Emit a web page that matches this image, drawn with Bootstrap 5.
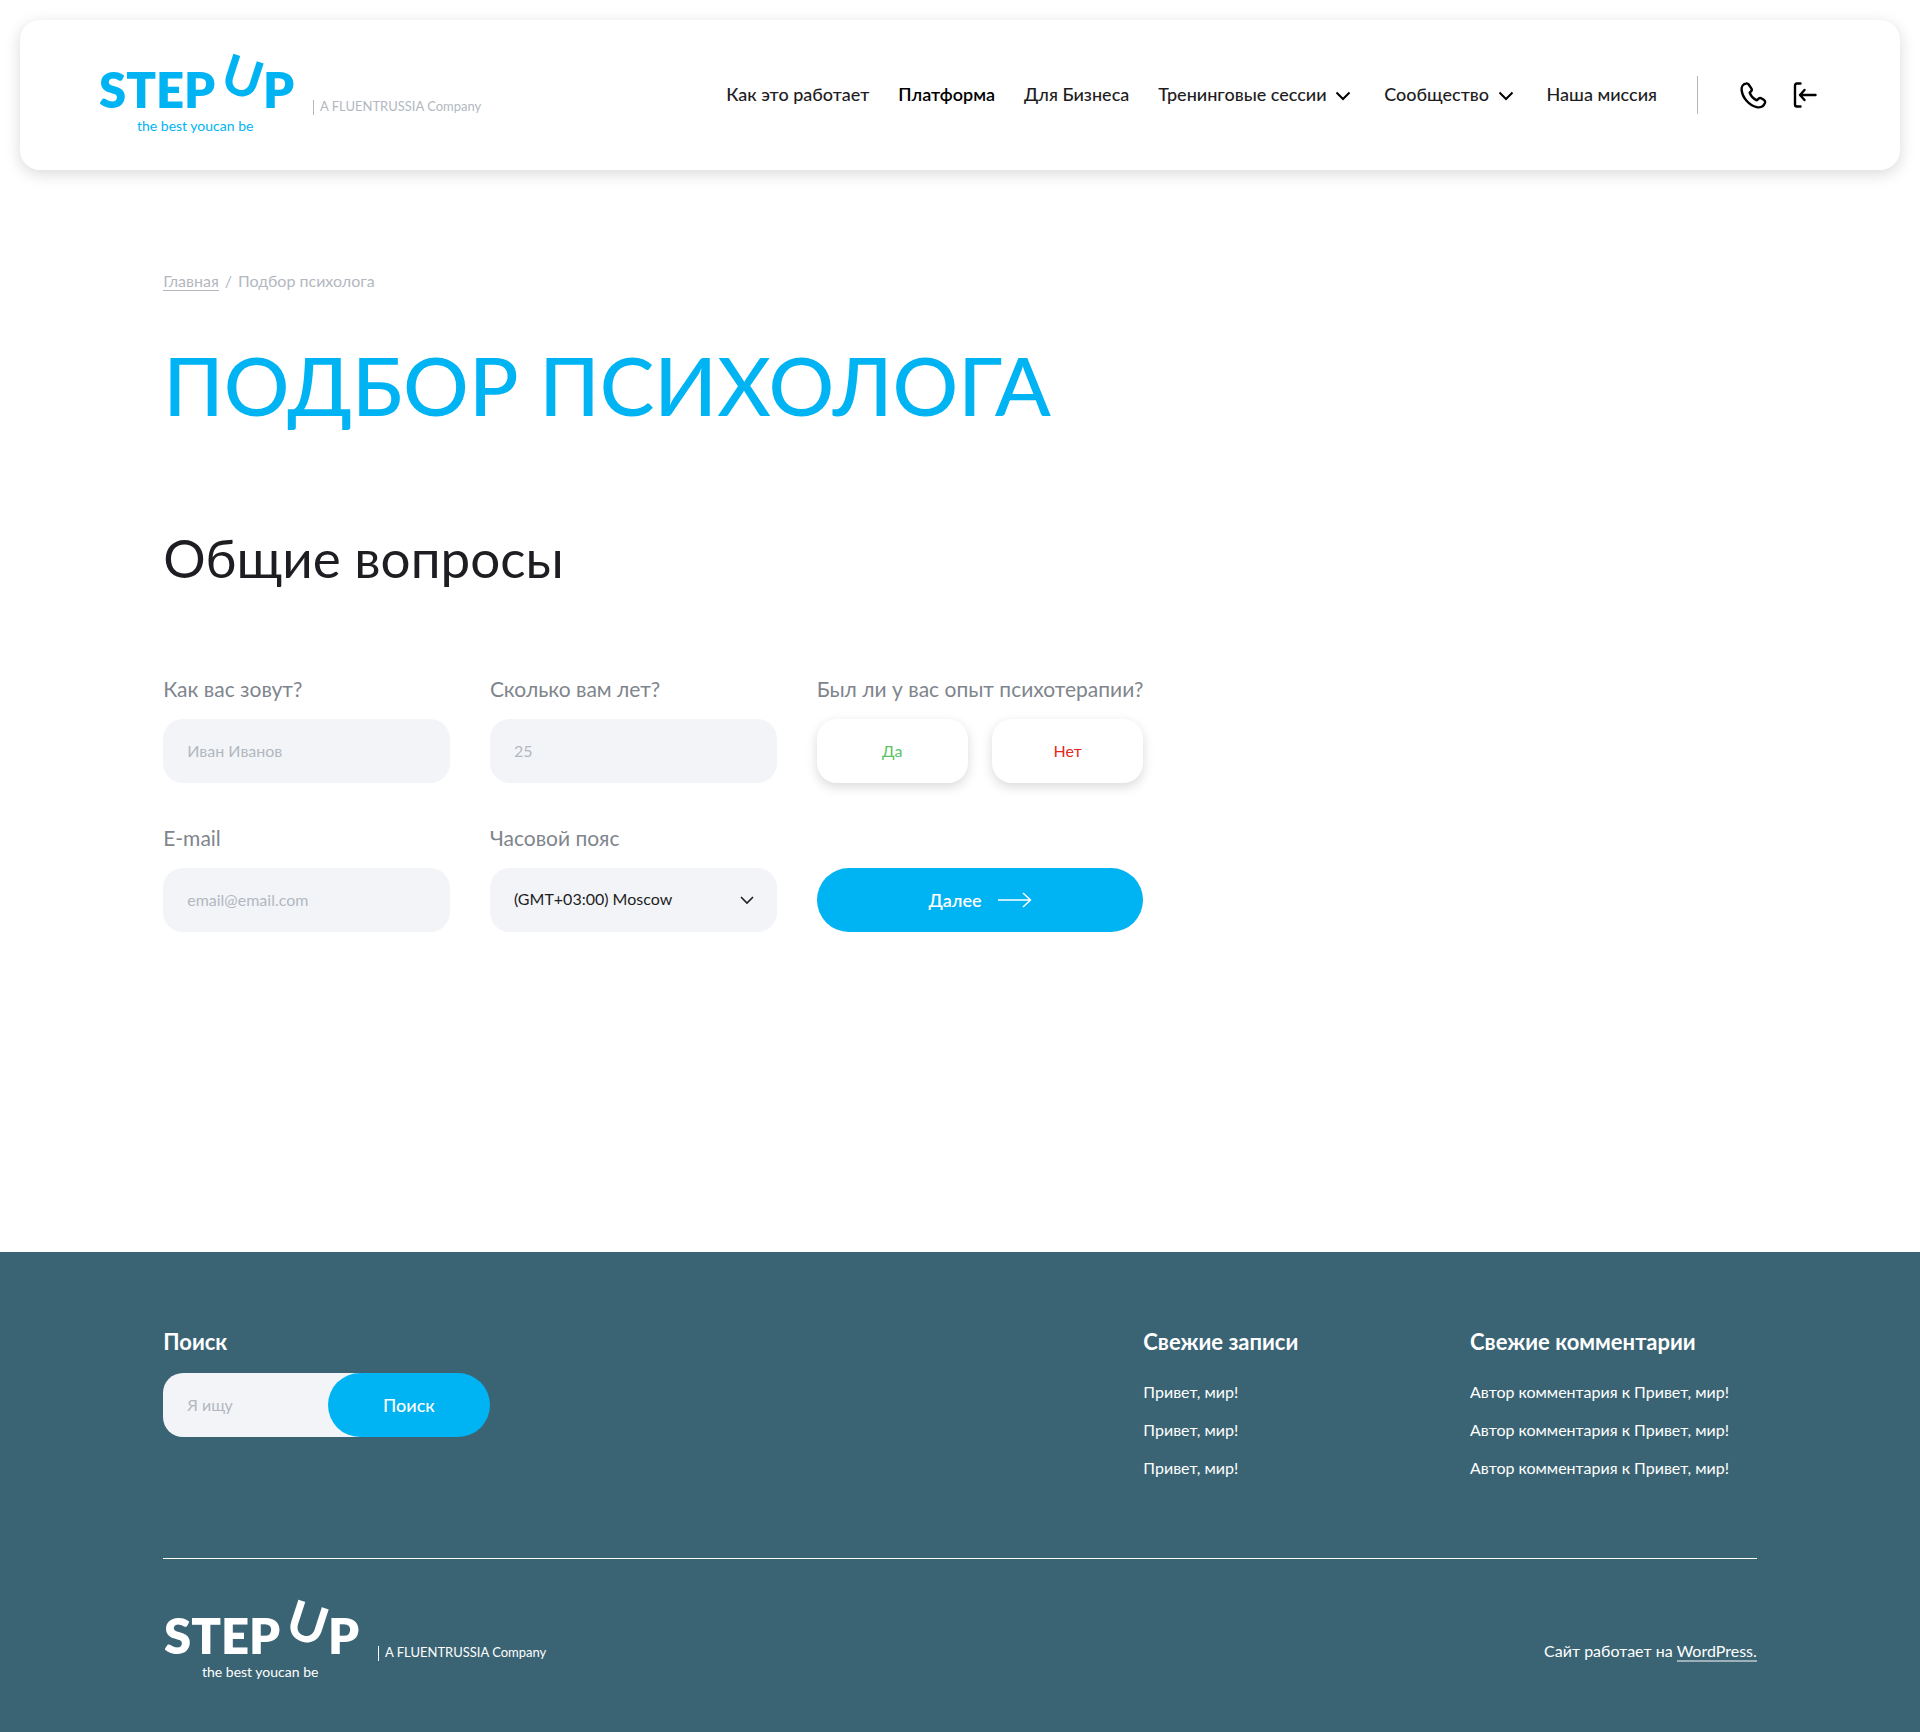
<!DOCTYPE html>
<html lang="ru">
<head>
<meta charset="utf-8">
<meta name="viewport" content="width=device-width, initial-scale=1">
<title>Подбор психолога</title>
<link href="https://cdn.jsdelivr.net/npm/bootstrap@5.3.0/dist/css/bootstrap.min.css" rel="stylesheet">
<style>
:root{--su-blue:#00b3f3;--su-gray:#7f858d;--su-pale:#b3b8c0;--su-field:#f2f4f8;--su-teal:#3a6474;--su-ink:#1d1d22}
body{font-family:Lato,"Liberation Sans",sans-serif;font-size:16px;line-height:24px;color:var(--su-ink);background:#fff}
.topbar{margin:20px;padding:0 80px;min-height:150px;border-radius:20px;background:#fff;box-shadow:0 4px 16px rgba(0,0,0,.15)}
.brand{color:var(--su-blue)}
.brand svg{display:block;font-family:Lato,"Liberation Sans",sans-serif}
.brand .owner{fill:var(--su-pale)}
.foot .brand{color:#fff}
.foot .brand .owner{fill:#fff}
.topbar .nav-link{padding:0 0 2px;font-size:18px;line-height:28px;font-weight:500;color:var(--su-ink)}
.topbar .nav-link.active{color:#000;font-weight:600}
.menu-list{gap:29px}
.menu-list .has-sub{margin-right:4px}
.menu-rule{width:1px;height:38px;background:var(--su-pale);margin:0 42px 0 40px}
.tool-icons{gap:26px;padding-right:3px}
.wrap{padding-left:8.5%;padding-right:8.5%}
.fifths{--bs-gutter-x:40px}
.fifths>*{width:20%}
.crumbs{padding-top:79px;color:var(--su-pale);--bs-breadcrumb-divider-color:var(--su-pale);--bs-breadcrumb-item-padding-x:6px}
.crumbs a{color:inherit;text-decoration:none;border-bottom:1px solid}
h1{font-size:82px;line-height:100px;font-weight:500;color:var(--su-blue);margin:41px 0 0;text-transform:uppercase}
h2{font-size:53px;line-height:68px;font-weight:400;margin:90px 0 0}
.quiz{padding-top:81px;padding-bottom:320px}
.quiz .row+.row{margin-top:39px}
.form-label{font-size:21px;line-height:32px;color:var(--su-gray);margin-bottom:14px;white-space:nowrap;display:block}
.su-field,.su-field:focus{height:64px;border:0;border-radius:20px;background-color:var(--su-field);padding:0 24px 2px;font-size:16px;color:var(--su-ink)}
.form-select.su-field{background-image:url("data:image/svg+xml,%3Csvg xmlns='http://www.w3.org/2000/svg' viewBox='0 0 14 14' fill='none' stroke='%231d1d22' stroke-width='1.600'%3E%3Cpath d='M1 4l6 6 6-6'/%3E%3C/svg%3E");background-size:14px;background-position:right 23px center}
.su-field::placeholder{color:var(--su-pale);opacity:1}
.su-choice{height:64px;border-radius:20px;background:#fff;border:0;box-shadow:0 4px 12px rgba(0,0,0,.15)}
.su-yes{color:#5bc466}
.su-no{color:#e3281c}
.su-main{height:64px;border:0;border-radius:32px;background:var(--su-blue);color:#fff;font-size:18px;font-weight:500}
.go-next{font-weight:600;gap:16px}
.spread{margin-right:-40px}
.foot{background:var(--su-teal);color:#fff;padding-top:76px}
.foot a{color:inherit;text-decoration:none}
.foot-title{font-size:22px;line-height:28px;font-weight:700;margin-bottom:17px;white-space:nowrap;display:block}
.foot-list{display:grid;gap:14px;white-space:nowrap;padding-top:7px}
.finder .su-field{padding-right:62px;margin-right:-62px;min-width:0}
.finder .su-main{width:162px;flex:none;z-index:1}
.foot-base{border-top:1px solid #fff;margin-top:78px;padding:27px 0 36px 2px}
.foot-base .made-with{padding-top:20px}
.foot-base .made-with a{border-bottom:2px solid #9cb1b9}
</style>
</head>
<body>
<svg class="d-none" aria-hidden="true">
  <symbol id="logo" viewBox="0 -10 400 110">
    <g fill="currentColor"><g font-size="49" font-weight="800"><text x="-1" y="58">STEP</text><text x="163" y="58">P</text></g>
    <text transform="translate(118 39) rotate(18)" font-size="53" font-weight="700">U</text>
    <text x="37" y="81" font-size="14">the best youcan be</text></g>
    <rect x="213" y="50" width="1" height="15"/><text x="220" y="61" font-size="13">A FLUENTRUSSIA Company</text>
  </symbol>
  <symbol id="chev" viewBox="0 0 16 10"><path fill="none" stroke="#000" stroke-width="2" d="M1.500 1.500 8 8l6.500-6.500"/></symbol>
</svg>

<header class="topbar d-flex align-items-center justify-content-between">
  <a class="brand" href="#" aria-label="Step Up"><svg class="owner" width="400" height="110"><use href="#logo"/></svg></a>
  <div class="d-flex align-items-center">
    <nav aria-label="Меню"><ul class="nav menu-list flex-nowrap text-nowrap">
      <li><a class="nav-link" href="#">Как это работает</a></li>
      <li><a class="nav-link active" href="#">Платформа</a></li>
      <li><a class="nav-link" href="#">Для Бизнеса</a></li>
      <li class="has-sub"><a class="nav-link" href="#">Тренинговые сессии <svg class="ms-1" width="16" height="10"><use href="#chev"/></svg></a></li>
      <li class="has-sub"><a class="nav-link" href="#">Сообщество <svg class="ms-1" width="16" height="10"><use href="#chev"/></svg></a></li>
      <li><a class="nav-link" href="#">Наша миссия</a></li>
    </ul></nav>
    <div class="menu-rule"></div>
    <div class="tool-icons d-flex align-items-center">
      <a href="#" aria-label="Телефон"><svg class="d-block" width="27" height="27" viewBox="0 0 27 27" fill="none" stroke="#000" stroke-width="2.400" stroke-linejoin="round"><path d="M6 1.500C3 2 1.200 5 1.700 8.500c1 7.500 7.500 15 15 16.600 3.800.8 7-1 8.300-4.200.4-1.200 0-2-.9-2.800l-2.500-1.700c-1-.7-2.200-.5-3 .2l-1.600 1.700c-3.200-1.300-6-4.300-7.300-7.600l1.500-1.500c.8-.9.700-2 .1-2.900L8.700 2.500C8.100 1.600 7.200 1.200 6 1.500z"/></svg></a>
      <a href="#" aria-label="Войти"><svg class="d-block" width="24" height="27" viewBox="0 0 24 27" fill="none" stroke="#000" stroke-width="2.400" stroke-linecap="round" stroke-linejoin="round"><path d="M7.500 1.500H4Q2 1.500 2 3.500v19q0 2 2 2h3.500M22.500 13H7.500M11.500 8l-4.500 5 4.500 5"/></svg></a>
    </div>
  </div>
</header>

<main class="wrap">
  <nav aria-label="Навигация"><ol class="breadcrumb crumbs mb-0"><li class="breadcrumb-item"><a href="#">Главная</a></li><li class="breadcrumb-item">Подбор психолога</li></ol></nav>
  <h1>Подбор психолога</h1>
  <h2>Общие вопросы</h2>
  <form class="quiz">
    <div class="row fifths">
      <div><label class="form-label" for="name">Как вас зовут?</label><input class="form-control su-field" id="name" type="text" placeholder="Иван Иванов"></div>
      <div><label class="form-label" for="age">Сколько вам лет?</label><input class="form-control su-field" id="age" type="text" placeholder="25"></div>
      <div role="group" aria-labelledby="exp"><span class="form-label" id="exp">Был ли у вас опыт психотерапии?</span>
        <div class="spread d-flex gap-4"><button class="btn su-choice su-yes flex-fill w-50" type="button">Да</button><button class="btn su-choice su-no flex-fill w-50" type="button">Нет</button></div></div>
    </div>
    <div class="row fifths align-items-end">
      <div><label class="form-label" for="mail">E-mail</label><input class="form-control su-field" id="mail" type="email" placeholder="email@email.com"></div>
      <div><label class="form-label" for="zone">Часовой пояс</label><select class="form-select su-field" id="zone"><option>(GMT+03:00) Moscow</option></select></div>
      <div><div class="spread d-flex"><button class="btn su-main go-next flex-fill d-flex align-items-center justify-content-center" type="submit">Далее <svg width="34" height="16" viewBox="0 0 34 16" fill="none" stroke="#fff" stroke-width="1.500"><path d="M0 8h32.500M25 1l7.500 7-7.500 7"/></svg></button></div></div>
    </div>
  </form>
</main>

<footer class="foot wrap">
  <div class="row fifths">
    <div><label class="foot-title" for="find">Поиск</label>
      <form class="finder spread d-flex" role="search"><input class="form-control su-field flex-fill" id="find" type="search" placeholder="Я ищу"><button class="btn su-main" type="submit">Поиск</button></form></div>
    <div></div><div></div>
    <div><h3 class="foot-title">Свежие записи</h3>
      <ul class="foot-list list-unstyled mb-0"><li><a href="#">Привет, мир!</a></li><li><a href="#">Привет, мир!</a></li><li><a href="#">Привет, мир!</a></li></ul></div>
    <div><h3 class="foot-title">Свежие комментарии</h3>
      <ul class="foot-list list-unstyled mb-0"><li>Автор комментария к <a href="#">Привет, мир!</a></li><li>Автор комментария к <a href="#">Привет, мир!</a></li><li>Автор комментария к <a href="#">Привет, мир!</a></li></ul></div>
  </div>
  <div class="foot-base d-flex align-items-center justify-content-between">
    <a class="brand" href="#" aria-label="Step Up"><svg class="owner" width="400" height="110"><use href="#logo"/></svg></a>
    <span class="made-with">Сайт работает на <a href="#">WordPress.</a></span>
  </div>
</footer>
<script src="https://cdn.jsdelivr.net/npm/bootstrap@5.3.0/dist/js/bootstrap.bundle.min.js"></script>
</body>
</html>
